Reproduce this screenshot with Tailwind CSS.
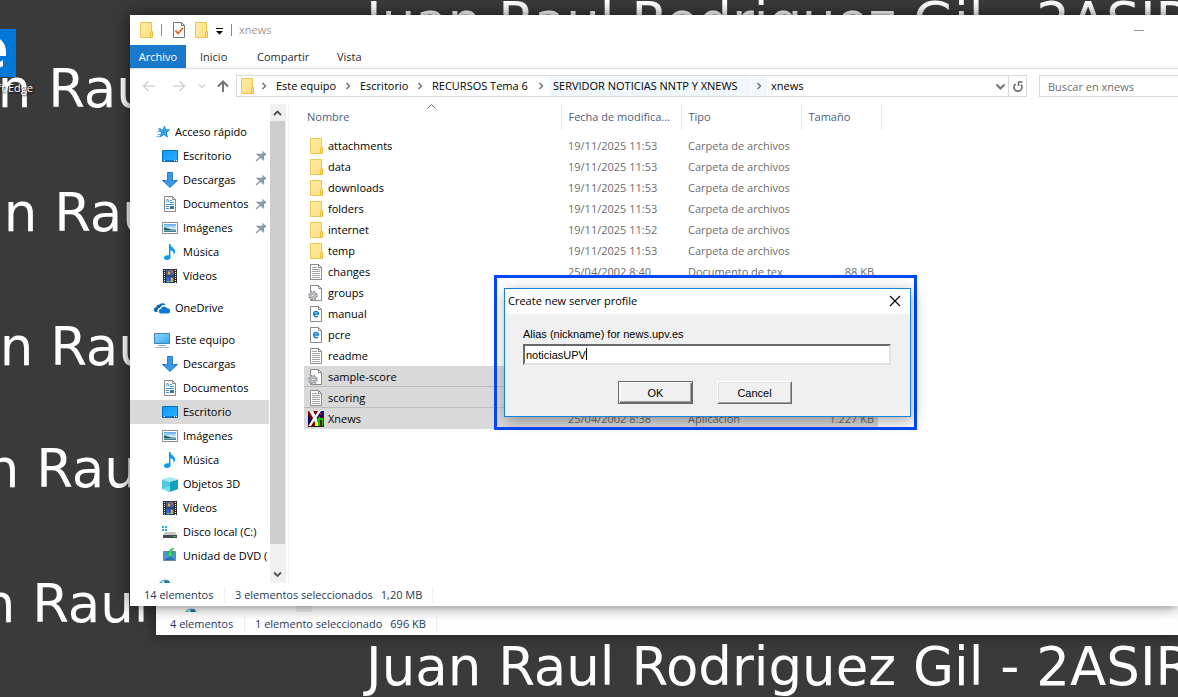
<!DOCTYPE html>
<html lang="es">
<head>
  <meta charset="UTF-8">
  <meta name="viewport" content="width=device-width, initial-scale=1">
  <title>xnews</title>
  <script src="https://cdn.jsdelivr.net/npm/@tailwindcss/browser@4"></script>
</head>
<body class="bg-[#3a3a3a] font-['Open_Sans',sans-serif] text-[11px] leading-4 text-black">

  <!-- icons -->
  <svg class="absolute w-0 h-0">
    <defs>
      <linearGradient id="g-folder" x1="0" y1="0" x2="1" y2="1"><stop offset="0" stop-color="#ffeba3"/><stop offset="1" stop-color="#ffe083"/></linearGradient>
      <linearGradient id="g-screen" x1="0" y1="0" x2="1" y2="1"><stop offset="0" stop-color="#0e9bfb"/><stop offset="1" stop-color="#2bb0ff"/></linearGradient>
      <linearGradient id="g-pc" x1="0" y1="0" x2="1" y2="1"><stop offset="0" stop-color="#8fd8fb"/><stop offset="1" stop-color="#37a9ee"/></linearGradient>
      <linearGradient id="g-photo" x1="0" y1="0" x2="0" y2="1"><stop offset="0" stop-color="#5fa6e8"/><stop offset=".55" stop-color="#d9efff"/><stop offset="1" stop-color="#2f6f86"/></linearGradient>
    </defs>
    <symbol id="i-folder" viewBox="0 0 16 16">
      <path d="M2.5.5h11v15h-11z" fill="url(#g-folder)" stroke="#ecc651"/>
      <path d="M12.5 15.5v-5l1-1h1v6z" fill="#ffe28a" stroke="#e6bb3c"/>
    </symbol>
    <symbol id="i-text" viewBox="0 0 16 16">
      <path d="M2.5.5h8l3 3v12h-11z" fill="#fff" stroke="#8a8a8a"/>
      <path d="M10.5.5v3h3" fill="none" stroke="#8a8a8a"/>
      <path d="M4 3.5h5M4 5.5h8M4 7.5h8M4 9.5h8M4 11.5h8M4 13.5h8" stroke="#a3a3a3"/>
    </symbol>
    <symbol id="i-config" viewBox="0 0 16 16">
      <path d="M2.5.5h8l3 3v12h-11z" fill="#fff" stroke="#8a8a8a"/>
      <path d="M10.5.5v3h3" fill="none" stroke="#8a8a8a"/>
      <circle cx="5" cy="10.5" r="4" fill="#c9ced3" stroke="#8d949a" stroke-width="1.6" stroke-dasharray="1.7 1.44"/>
      <circle cx="5" cy="10.5" r="3" fill="#c9ced3" stroke="#9aa1a7" stroke-width=".8"/>
      <circle cx="5" cy="10.5" r="1.2" fill="#fff" stroke="#8d949a" stroke-width=".8"/>
    </symbol>
    <symbol id="i-html" viewBox="0 0 16 16">
      <path d="M2.5.5h8l3 3v12h-11z" fill="#fff" stroke="#8a8a8a"/>
      <path d="M10.5.5v3h3" fill="none" stroke="#8a8a8a"/>
      <path d="M5.8 7.9h4.6c0-3.2-4.7-3.2-4.7.2 0 2.7 2.7 3 4.4 2" fill="none" stroke="#0f7fd8" stroke-width="1.5"/>
    </symbol>
    <symbol id="i-xnews" viewBox="0 0 16 16">
      <path d="M0 0h16v16H0z" fill="#800000"/>
      <path d="M10 0h6v6H8z" fill="#000080"/>
      <path d="M0 4l4 5-4 5z" fill="#000060"/>
      <path d="M1 0h4l2.5 4.5L10 0h3L8.500 7l3 8H8L6.300 9.500 3 15H.5l4.700-8z" fill="#fff"/>
      <path d="M9 8l3-3v2h4v8h-2V9h-2v6H9z" fill="#0c0"/>
      <path d="M7 11h3v4H7z" fill="#ff0"/>
      <path d="M12 2h2v2h-2z" fill="#c00"/>
      <path d="M0 15.500h16M15.500 0v16" stroke="#222"/>
    </symbol>
    <symbol id="i-check" viewBox="0 0 16 16">
      <path d="M2.500.5h8l3 3v12h-11z" fill="#fafafa" stroke="#777"/>
      <path d="M10.500.5v3h3" fill="none" stroke="#777"/>
      <path d="M4.500 8.500l2.500 3 5-5.500" fill="none" stroke="#e8601c" stroke-width="1.8"/>
    </symbol>
    <symbol id="i-star" viewBox="0 0 16 16">
      <path d="M10.500 2l1 3.700 4.200.1-3.300 2.600 1 4.800-3.400-2.700-4.300 2.500 1.800-4.600L4.800 5.700l4.200.1z" fill="#2ea3ee" stroke="#1a7fc8" stroke-width=".8"/>
      <path d="M4 4.500h3M3 7.500h3M3.500 10.500h3M2.500 12.500h3" stroke="#62bdf3"/>
    </symbol>
    <symbol id="i-desktop" viewBox="0 0 16 16">
      <path d="M.5 2.500h15v11H.5z" fill="url(#g-screen)" stroke="#0b6fbe"/>
      <path d="M1 12.500h14" stroke="#0a75cb"/>
      <path d="M2 12.500h1M12 12.500h1M14 12.500h1" stroke="#fff"/>
    </symbol>
    <symbol id="i-down" viewBox="0 0 16 16">
      <path d="M5.500.5h5v8h5L8 15.500.5 8.500h5z" fill="#3f97e4" stroke="#2b7fd0"/>
    </symbol>
    <symbol id="i-doc" viewBox="0 0 16 16">
      <path d="M2.500.5h8l3 3v12h-11z" fill="#fff" stroke="#8a8a8a"/>
      <path d="M10.500.5v3h3" fill="none" stroke="#8a8a8a"/>
      <path d="M4 6l1.500-3L7 6M8 4.500h2M8 6.500h4M4 8.500h8M4 10.500h3M4 12.500h3" fill="none" stroke="#3494d6"/>
      <path d="M8 10h4v3H8z" fill="#3b6f8c"/>
    </symbol>
    <symbol id="i-images" viewBox="0 0 16 16">
      <path d="M.5 2.500h15v11H.5z" fill="#fff" stroke="#8c8c8c"/>
      <path d="M2 4h12v8H2z" fill="url(#g-photo)"/>
      <path d="M2 7.500c3 0 4 2 12 2.500H2z" fill="#1e5a56"/>
    </symbol>
    <symbol id="i-music" viewBox="0 0 16 16">
      <path d="M7 0h1.500c0 3 4.500 4 4.500 7.500 0 1.500-.6 2.500-1.500 3.500.6-3-1-4.300-3-4.800V13c0 1.700-1.500 3-3.500 3-1.700 0-3-.9-3-2.300 0-1.700 2-3 5-2.400z" fill="#0a9bf5"/>
    </symbol>
    <symbol id="i-video" viewBox="0 0 16 16">
      <path d="M1 1h14v14H1z" fill="#2b2b2b"/>
      <path d="M4 1.500h8v6H4z" fill="#49619f"/><path d="M4 8.500h8v6H4z" fill="#2c62c9"/>
      <path d="M6 3.500h2v3H6zM9 10h2v3H9z" fill="#e9b21d"/><path d="M9 2.500h2v2H9z" fill="#d9552c"/>
      <path d="M5 13.500h6" stroke="#8db53b"/>
      <path d="M2.500 2v13M13.500 2v13" stroke="#eee" stroke-dasharray="1 1"/>
    </symbol>
    <symbol id="i-cloud" viewBox="0 0 16 16">
      <path d="M3.500 12H2.300A2.300 2.300 0 0 1 2 7.400 3.600 3.600 0 0 1 5.500 4.500 4.300 4.300 0 0 1 12 4.800C8 4.300 6.500 6 6.300 7.800 4 8 3 9.800 3.500 12z" fill="#0a63bb"/>
      <path d="M6.500 13.500a2.300 2.300 0 0 1 .4-4.500A3.300 3.300 0 0 1 13 8.300a2.600 2.600 0 0 1 1 5.200z" fill="#0f78d4"/>
    </symbol>
    <symbol id="i-pc" viewBox="0 0 16 16">
      <path d="M.5 1.500h15v10H.5z" fill="url(#g-pc)" stroke="#3b86b4"/>
      <path d="M4 13.500h8" stroke="#8ba9b8"/><path d="M1 15.500h14" stroke="#9fb9c6"/>
    </symbol>
    <symbol id="i-cube" viewBox="0 0 16 16">
      <path d="M0 3.500L8 1l8 2.500L8 6z" fill="#a6e8f3"/>
      <path d="M0 3.500L8 6v10l-8-3z" fill="#4fcbe0"/>
      <path d="M16 3.500L8 6v10l8-3z" fill="#14a3bf"/>
      <path d="M0 13l8-3v6z" fill="#7cdcea"/>
    </symbol>
    <symbol id="i-disk" viewBox="0 0 16 16">
      <path d="M0 2h2v2H0zM3 2h2v2H3zM0 5h2v2H0zM3 5h2v2H3z" fill="#1aaaf2"/>
      <path d="M3 8h10l2 3H1z" fill="#c5c8ca"/>
      <path d="M1 11h14v3H1z" fill="#4a4d50"/><path d="M11.500 12.500h2" stroke="#4ddb54"/>
    </symbol>
    <symbol id="i-dvd" viewBox="0 0 16 16">
      <path d="M1.500 3.500h12v9h-12z" fill="#4b97d8" stroke="#6c87a0"/>
      <path d="M2 12l6-4 5 4z" fill="#2e6fb5"/>
      <path d="M12 0C9 .5 7 2 7 5H4.500L8 9.500 11.500 5H9.500C9.500 3 10.500 1.500 12 0z" fill="#3bdc62" stroke="#1c9c3c" stroke-width=".6"/>
    </symbol>
    <symbol id="i-net" viewBox="0 0 16 16">
      <circle cx="9" cy="9" r="6.500" fill="#4fa9c9"/><path d="M9 3.500h4v3H9z" fill="#2b7396"/><path d="M6 4h2v2H6z" fill="#bfe3ef"/>
    </symbol>
    <symbol id="i-pin" viewBox="0 0 12 12">
      <path d="M7.500 1.500L11 5M6.500 5l2-2 1.500 1.500-2 2zM2.500 4.500h4l2 2v3z" fill="#8d99a5" stroke="#8d99a5" stroke-width="1.300"/>
      <path d="M5 7.500L1 11" stroke="#8d99a5" stroke-width="1.300"/>
    </symbol>
    <symbol id="i-sep" viewBox="0 0 8 8">
      <path d="M2.500 1l3 3-3 3" fill="none" stroke="#757575" stroke-width="1.500"/>
    </symbol>
  </svg>

  <main class="relative min-h-screen overflow-hidden">
    <!-- wallpaper -->
    <div class="text-white whitespace-nowrap font-['DejaVu_Sans',sans-serif] text-[53px] leading-[62px]">
      <p class="absolute left-[366px] -top-[9px]">Juan Raul Rodriguez Gil - 2ASIR</p>
      <p class="absolute -left-[84px] top-[58px]">Juan Raul</p>
      <p class="absolute -left-[78px] top-[182px]">Juan Raul</p>
      <p class="absolute -left-[82px] top-[316px]">Juan Raul</p>
      <p class="absolute -left-[96px] top-[438px]">Juan Raul</p>
      <p class="absolute -left-[100px] top-[573px]">Juan Raul</p>
      <p class="absolute left-[366px] top-[636px]">Juan Raul Rodriguez Gil - 2ASIR</p>
    </div>

    <!-- desktop shortcut -->
    <a href="#" class="absolute top-[29px] -left-[43px] w-[76px] flex flex-col items-end text-white">
      <svg class="w-12 h-12 mr-[17px] bg-[#0078d7]" viewBox="0 0 48 48" fill="#fff">
        <path d="M9 22C11 12 17 8 24 8c9 0 14 7 14 15v4H18c0 8 10 9 17 4v6c-10 6-25 3-25-9 0-5 3-9 8-11-1 2-2 3-2 5h14c0-8-13-9-21 0z"/>
      </svg>
      <span class="mt-[3px] whitespace-nowrap [text-shadow:1px_1px_2px_black]">Microsoft Edge</span>
    </a>

    <!-- window behind -->
    <section class="absolute left-[156px] right-0 top-[596px] bg-white shadow-[0_0_12px_rgba(0,0,0,0.5)]">
      <div class="h-4 flex overflow-hidden">
        <svg class="w-4 h-4 ml-[26px] mt-[10px]"><use href="#i-net"/></svg>
        <div class="ml-[98px] w-4 bg-[#f0f0f0]"></div>
      </div>
      <footer class="flex items-center h-[23px] pl-[14px] text-[#1e395b]">
        <span class="w-[74px]">4 elementos</span>
        <span class="border-l border-[#f0f0f0] pl-[10px]">1 elemento seleccionado</span>
        <span class="ml-2 pr-[10px] border-r border-[#f0f0f0]">696 KB</span>
      </footer>
    </section>

    <!-- explorer window -->
    <section class="absolute left-[130px] right-0 top-[15px] bg-white shadow-[0_0_14px_rgba(0,0,0,0.6)]">
      <header class="flex items-center h-[30px] pl-2 pr-[34px]">
        <svg class="w-4 h-4"><use href="#i-folder"/></svg>
        <span class="w-px h-3 bg-[#8a8a8a] ml-[7px]"></span>
        <svg class="w-4 h-4 ml-[9px]"><use href="#i-check"/></svg>
        <svg class="w-4 h-4 ml-[6px]"><use href="#i-folder"/></svg>
        <svg class="w-[7px] h-[7px] ml-[7px] mt-[2px]" viewBox="0 0 7 7"><path d="M0 0h7v1H0zM0 3h7L3.500 6.500z"/></svg>
        <span class="w-px h-3 bg-[#8a8a8a] ml-2"></span>
        <h1 class="ml-[7px] text-[#999]">xnews</h1>
        <button class="ml-auto w-[10px] h-4" aria-label="Minimizar"><span class="block h-px bg-[#999]"></span></button>
      </header>

      <nav class="flex items-center h-6 border-b border-[#dadbdc] text-[#2b2b2b]">
        <a href="#" class="w-14 h-full leading-6 text-center bg-[#1979ca] text-white">Archivo</a>
        <a href="#" class="w-[57px] pl-[14px]">Inicio</a>
        <a href="#" class="w-20 pl-[14px]">Compartir</a>
        <a href="#" class="w-14 pl-[14px]">Vista</a>
      </nav>

      <div class="flex items-center h-[35px] pl-3 pb-px whitespace-nowrap">
        <button aria-label="Atrás"><svg class="w-[14px] h-3" viewBox="0 0 14 12" fill="none" stroke="#d4d4d4" stroke-width="1.500"><path d="M13 6H2M6.500 1L1.500 6l5 5"/></svg></button>
        <button class="ml-4" aria-label="Adelante"><svg class="w-[14px] h-3" viewBox="0 0 14 12" fill="none" stroke="#d4d4d4" stroke-width="1.500"><path d="M1 6h11M7.500 1l5 5-5 5"/></svg></button>
        <button class="ml-3" aria-label="Recientes"><svg class="w-2 h-2" viewBox="0 0 8 8" fill="none" stroke="#d4d4d4" stroke-width="1.500"><path d="M1 2.500l3 3 3-3"/></svg></button>
        <button class="ml-[11px]" aria-label="Subir"><svg class="w-3 h-3" viewBox="0 0 12 12" fill="none" stroke="#767676" stroke-width="2"><path d="M6 12V1.500M1 6.500l5-5 5 5"/></svg></button>
        <div class="flex-1 flex items-center h-[22px] ml-[7px] border border-[#d9d9d9]">
          <svg class="w-4 h-4 ml-[2px]"><use href="#i-folder"/></svg>
          <svg class="w-2 h-2 ml-[5px]"><use href="#i-sep"/></svg>
          <a href="#" class="ml-2 w-[60px]">Este equipo</a>
          <svg class="w-2 h-2 ml-2"><use href="#i-sep"/></svg>
          <a href="#" class="ml-2 w-12">Escritorio</a>
          <svg class="w-2 h-2 ml-2"><use href="#i-sep"/></svg>
          <a href="#" class="ml-2 w-[98px]">RECURSOS Tema 6</a>
          <svg class="w-2 h-2 ml-[7px]"><use href="#i-sep"/></svg>
          <div class="flex items-center h-full ml-1 bg-[#f0f8fe]">
            <a href="#" class="w-[202px] pl-1 h-full leading-5 border-r border-white">SERVIDOR NOTICIAS NNTP Y XNEWS</a>
            <svg class="w-2 h-2 mx-1"><use href="#i-sep"/></svg>
          </div>
          <a href="#" class="ml-1">xnews</a>
          <button class="ml-auto mr-[3px]" aria-label="Historial"><svg class="w-[9px] h-[9px]" viewBox="0 0 9 9" fill="none" stroke="#777" stroke-width="2"><path d="M.5 2.500l4 4 4-4"/></svg></button>
          <button class="flex items-center w-[18px] h-full pl-1 border-l border-[#d9d9d9]" aria-label="Actualizar">
            <svg class="w-[10px] h-[11px]" viewBox="0 0 10 11" fill="none" stroke="#6b6b6b" stroke-width="1.600"><path d="M2.500 3a4 4 0 1 0 5.500.6M9.500 1h-4v4"/></svg>
          </button>
        </div>
        <input type="search" aria-label="Buscar" placeholder="Buscar en xnews" class="ml-3 w-[139px] h-[22px] pl-2 border border-r-0 border-[#d9d9d9] placeholder:text-[#6d6d6d] outline-none">
      </div>

      <div class="flex">
        <aside class="w-[139px] pt-4 overflow-hidden">
          <ul id="tree"></ul>
          <div class="h-[7px] mt-2 pl-[26px] overflow-hidden"><svg class="w-4 h-4 mt-px"><use href="#i-net"/></svg></div>
        </aside>
        <div class="flex flex-col w-4 ml-px bg-[#f0f0f0]">
          <svg class="w-[15px] h-[17px]" viewBox="0 0 15 17" fill="none" stroke="#505050" stroke-width="1.800"><path d="M4 11l3.500-3.500L11 11"/></svg>
          <div class="w-[15px] flex-1 bg-[#cdcdcd]"></div>
          <svg class="w-[15px] h-[39px]" viewBox="0 0 15 39" fill="none" stroke="#505050" stroke-width="1.800"><path d="M4 28.500L7.500 32l3.500-3.500"/></svg>
        </div>
        <div class="flex-1 ml-[2px] pl-[15px] border-l border-[#f3f3f3]">
          <table class="table-fixed w-[577px] text-[#6d6d6d]">
            <colgroup><col class="w-[257px]"><col class="w-[120px]"><col class="w-[120px]"><col class="w-[77px]"><col class="w-[3px]"></colgroup>
            <thead class="text-left text-[#4c607a]">
              <tr class="h-[26px]">
                <th class="relative p-0 pl-[3px] font-normal border-r border-[#e5e5e5]">Nombre
                  <svg class="absolute left-[123px] top-0 w-[9px] h-[5px]" viewBox="0 0 9 5" fill="none" stroke="#6d6d6d"><path d="M.5 4.500l4-4 4 4"/></svg>
                </th>
                <th class="p-0 pl-[7px] font-normal border-r border-[#e5e5e5] whitespace-nowrap">Fecha de modifica...</th>
                <th class="p-0 pl-[7px] font-normal border-r border-[#e5e5e5]">Tipo</th>
                <th class="p-0 pl-[7px] font-normal border-r border-[#e5e5e5]" colspan="2">Tamaño</th>
              </tr>
              <tr class="h-[5px]"></tr>
            </thead>
            <tbody id="files"></tbody>
          </table>
        </div>
      </div>

      <footer class="flex items-center h-[23px] pl-[14px] text-[#1e395b]">
        <span class="w-20">14 elementos</span>
        <span class="border-l border-[#f0f0f0] pl-[10px]">3 elementos seleccionados</span>
        <span class="ml-2 pr-[10px] border-r border-[#f0f0f0]">1,20 MB</span>
      </footer>
    </section>

    <!-- highlighted dialog -->
    <div class="absolute left-[494px] top-[275px] w-[423px] border-3 border-[#0048ff] pt-[10px] pb-[10px] pl-[7px] pr-[3px]">
      <form class="bg-[#f0f0f0] border border-[#1883d7] shadow-[2px_4px_14px_rgba(0,0,0,0.35)]">
        <div class="flex items-center justify-between h-[25px] pl-[3px] pr-[9px] pb-px bg-white">
          <h2>Create new server profile</h2>
          <button type="button" aria-label="Close"><svg class="w-3 h-3" viewBox="0 0 12 12" stroke="#000" stroke-width="1.100"><path d="M1 1l10 10M11 1L1 11"/></svg></button>
        </div>
        <div class="pt-3 pb-3 pl-[18px] pr-[19px] font-['Liberation_Sans',sans-serif]">
          <label for="alias" class="block">Alias (nickname) for news.upv.es</label>
          <div class="relative mt-[2px]">
            <input id="alias" type="text" value="noticiasUPV" class="block w-full h-[21px] pl-px bg-white border-2 border-t-[#696969] border-l-[#696969] border-b-[#e3e3e3] border-r-[#e3e3e3] outline-none">
            <span class="absolute left-[63px] top-1 w-px h-3 bg-black"></span>
          </div>
          <div class="flex justify-center gap-6 mt-4 pr-1">
            <button type="submit" class="w-[75px] h-[23px] border border-[#696969] shadow-[inset_1px_1px_0_#fff,inset_-1px_-1px_0_#696969,inset_-2px_-2px_0_#a0a0a0]">OK</button>
            <button type="button" class="w-[75px] h-[23px] border border-t-white border-l-white border-b-[#696969] border-r-[#696969] shadow-[inset_1px_1px_0_#e3e3e3,inset_-1px_-1px_0_#a0a0a0]">Cancel</button>
          </div>
        </div>
      </form>
    </div>
  </main>

  <script>
    const tree = [
      { icon: "star", name: "Acceso rápido", root: true },
      { icon: "desktop", name: "Escritorio", pin: true },
      { icon: "down", name: "Descargas", pin: true },
      { icon: "doc", name: "Documentos", pin: true },
      { icon: "images", name: "Imágenes", pin: true },
      { icon: "music", name: "Música" },
      { icon: "video", name: "Vídeos" },
      { icon: "cloud", name: "OneDrive", root: true, gap: true },
      { icon: "pc", name: "Este equipo", root: true, gap: true },
      { icon: "down", name: "Descargas" },
      { icon: "doc", name: "Documentos" },
      { icon: "desktop", name: "Escritorio", selected: true },
      { icon: "images", name: "Imágenes" },
      { icon: "music", name: "Música" },
      { icon: "cube", name: "Objetos 3D" },
      { icon: "video", name: "Vídeos" },
      { icon: "disk", name: "Disco local (C:)" },
      { icon: "dvd", name: "Unidad de DVD (" }
    ];

    const files = [
      ["folder", "attachments", "19/11/2025 11:53", "Carpeta de archivos", ""],
      ["folder", "data", "19/11/2025 11:53", "Carpeta de archivos", ""],
      ["folder", "downloads", "19/11/2025 11:53", "Carpeta de archivos", ""],
      ["folder", "folders", "19/11/2025 11:53", "Carpeta de archivos", ""],
      ["folder", "internet", "19/11/2025 11:52", "Carpeta de archivos", ""],
      ["folder", "temp", "19/11/2025 11:53", "Carpeta de archivos", ""],
      ["text", "changes", "25/04/2002 8:40", "Documento de tex", "88 KB"],
      ["config", "groups", "", "", ""],
      ["html", "manual", "", "", ""],
      ["html", "pcre", "", "", ""],
      ["text", "readme", "", "", ""],
      ["config", "sample-score", "", "", "", true],
      ["text", "scoring", "", "", "", true],
      ["xnews", "Xnews", "25/04/2002 8:38", "Aplicación", "1.227 KB", true]
    ];

    document.getElementById("tree").innerHTML = tree.map(t => `
      <li class="${t.gap ? "mt-2" : ""}">
        <a href="#" class="flex items-center gap-[5px] h-6 whitespace-nowrap ${t.root ? "pl-6" : "pl-8"} ${t.selected ? "bg-[#d9d9d9]" : ""}">
          <svg class="w-4 h-4 shrink-0"><use href="#i-${t.icon}"/></svg>
          <span>${t.name}</span>
          ${t.pin ? `<svg class="w-3 h-3 ml-auto mr-[2px] shrink-0"><use href="#i-pin"/></svg>` : ""}
        </a>
      </li>`).join("");

    document.getElementById("files").innerHTML = files.map(([icon, name, date, type, size, selected], i) => {
      const line = selected && i < files.length - 1 ? "shadow-[inset_0_-1px_0_#bcbcbc]" : "";
      const bg = selected ? "bg-[#d9d9d9] " + line : "";
      return `
      <tr class="h-[21px]">
        <td class="p-0 pl-1 text-black ${bg}"><div class="flex items-center gap-1"><svg class="w-4 h-4"><use href="#i-${icon}"/></svg>${name}</div></td>
        <td class="p-0 pl-[7px] ${bg}">${date}</td>
        <td class="p-0 pl-[7px] whitespace-nowrap ${bg}">${type}</td>
        <td class="p-0 pr-1 text-right whitespace-nowrap ${bg}">${size}</td>
      </tr>`;
    }).join("");
  </script>
</body>
</html>
